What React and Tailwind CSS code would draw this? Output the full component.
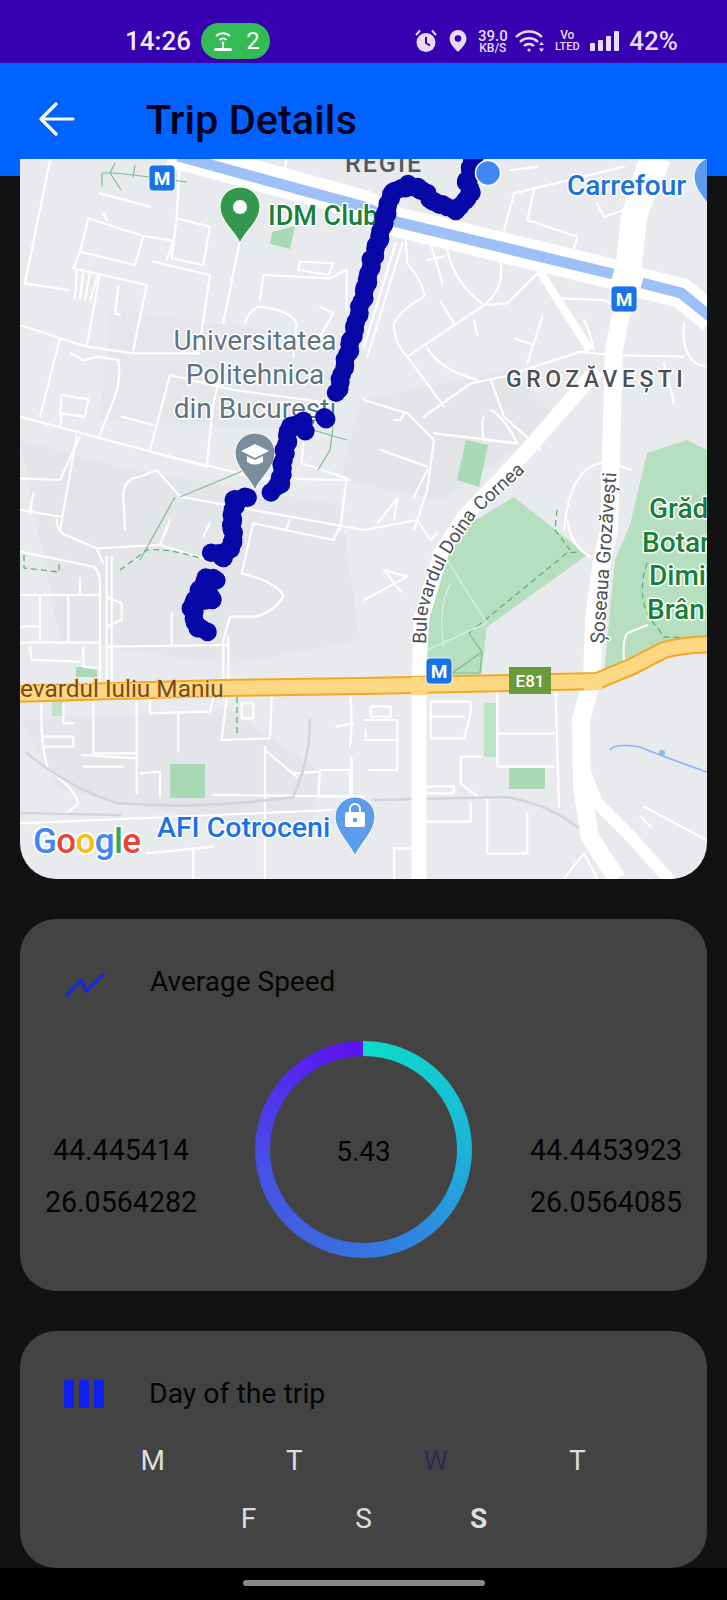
import React from "react";

const Q2 = [
  "M150 30 Q120 180 75 400","M75 400 L205 420","M265 205 L430 258 L405 345 L240 305 Z","M240 305 L220 355 L440 405 L400 600",
  "M300 370 L260 590","M430 258 L520 272 L500 330","M530 205 L630 230 L610 345 L515 325 Z","M460 335 L630 375 L595 610",
  "M60 525 L180 565 L260 590 L400 610 L595 610","M180 565 L120 800","M720 270 L670 520","M735 520 Q745 480 780 470 Q870 480 890 520 L880 620",
  "M215 610 L250 632 L290 620 L355 630 Q365 680 345 740 L295 865","M185 735 L265 748 L255 800 L180 790 Z","M185 790 L180 830",
  "M60 800 L470 910 L780 985 L1050 990","M470 910 L620 950 L640 760 L660 680","M510 675 L450 900","M510 675 L700 720 L1000 760",
  "M365 800 L460 825","M780 450 L790 375 L990 385 L1040 360","M900 335 L1000 340 L985 375 L895 360 Z","M910 880 L905 940 L1040 985 L1020 1140",
  "M230 860 L180 1140","M60 985 L180 990 L240 860","M370 1040 Q370 985 420 980 L470 960 L540 1040 L760 1080 L1092 1140","M370 1040 L375 1140",
  "M60 1080 L180 1100","M100 1030 L90 1090","M860 30 L850 70","M300 130 L450 170","M310 190 L320 210","M540 30 L530 205","M355 410 L345 490 L360 495",
  "M230 360 L225 445","M250 365 L240 445","M270 370 L255 450","M295 375 L270 450","M1040 360 L1040 480","M960 470 L1000 490 L960 560",
];
const Q3 = [
  "M90 520 Q110 480 180 440 Q180 400 130 340 L125 270","M90 520 Q90 580 130 620","M130 620 L360 465 L430 460 L520 370","M250 300 Q270 400 360 465 Q420 420 410 340",
  "M190 595 Q230 660 340 690","M130 620 L240 770","M180 800 L320 700 L420 680 L650 605 L740 615 L960 620","M450 565 L510 585","M535 500 L490 640",
  "M230 455 L270 520","M330 510 L340 555","M380 690 L420 800 L530 900","M590 445 L720 450 L760 470","M660 510 Q680 550 690 600",
  "M420 240 L450 130 L780 50","M490 210 L640 260 L630 295","M490 210 L510 120","M700 160 L720 200 L780 180","M440 60 L520 50",
  "M0 750 L130 790 L210 870 L190 1020 L150 1140","M210 850 L460 880","M50 900 L190 950","M150 1040 L190 960","M120 790 L110 810 L90 810","M40 1120 L100 1045 L90 1110",
  "M600 1140 Q620 920 750 940 L800 960","M360 800 Q350 810 360 870 L460 880 Q420 800 380 780","M900 640 L930 760","M960 520 Q950 640 1028 650","M190 330 L240 320","M200 280 L235 400",
  "M115 280 L10 620","M95 280 L0 590",
];
const Q4 = [
  "M60 95 L280 140 Q300 150 300 200 L300 480","M170 0 Q170 40 210 50 L290 85 L480 75 L610 115","M290 85 L310 130","M510 0 L480 75","M630 10 L610 50",
  "M760 10 L725 160 Q840 190 850 230 Q820 280 760 290 L690 290 L670 360 L670 480","M685 350 L685 480","M60 225 L300 225","M120 225 L120 365","M205 225 L205 365",
  "M60 320 L120 320","M60 368 L300 368","M320 380 L680 375","M515 280 L515 375","M90 380 L95 420 L240 425","M250 380 L250 440 L290 445","M320 230 L365 250 L365 300 L320 320",
  "M240 175 L240 225","M760 10 L1000 60 L1020 20","M870 0 L860 25","M320 110 L320 480","M335 110 L335 480","M125 550 Q120 680 145 750 Q220 800 235 850 L200 880 L60 880","M130 650 L220 650 L220 680 L130 680",
  "M190 550 L190 610 L220 610","M280 550 L280 700 L410 700","M410 545 L410 820","M450 545 L450 580 L630 575 L640 535","M535 580 L535 695","M665 660 L680 535",
  "M665 660 L810 655 L815 530","M725 550 L725 595 L760 595 L760 550 Z","M795 680 L795 1076","M1050 520 Q1060 600 1050 680","M1010 620 L1060 610","M960 750 L1050 750 L1050 830 L955 830 Z",
  "M880 760 L960 755","M640 825 L1092 830","M420 760 L480 755 L480 830","M795 690 L890 770","M245 705 L410 715","M250 740 L370 740","M60 910 L1000 870","M440 1000 L640 980","M580 990 L580 1076","M1055 715 L1055 870",
];
const Q5 = [
  "M20 560 L80 560 L80 590 L20 590 Z","M0 600 L100 600 L100 750 L15 750","M5 630 L5 660 L100 660","M200 545 L320 545 L320 580 L300 655 L200 655 Z","M200 590 L300 590",
  "M400 520 L400 740 L570 740","M400 640 L570 640","M190 800 L270 800 L270 820 L190 820","M575 520 L585 860","M290 710 L350 710","M290 710 L290 790 L340 830",
  "M370 840 L370 1000 L490 1000 L490 880","M320 850 L320 905 L190 905","M90 985 L145 985","M90 985 L90 1076","M0 240 L130 170 L60 150 L110 215","M0 30 L160 0","M160 0 L200 60 L220 40",
  "M610 0 Q620 80 680 110","M780 420 Q775 360 790 340 L850 315","M750 450 Q760 420 805 430","M840 860 L1028 960","M830 890 L860 920","M600 1076 L660 1000 L700 1076",
];

const ROUTE = [
  [[474, 156], [467, 182], [471, 193], [457, 210], [434, 202], [422, 190], [409, 185], [392, 193], [386, 213], [379, 240], [372, 260], [367, 283], [337, 393]],
  [[325, 418], [325, 418]],
  [[305, 432], [302, 422], [290, 427], [285, 450], [280, 483], [272, 492]],
  [[248, 497], [235, 500], [232, 520], [233, 543], [223, 557], [212, 552]],
  [[217, 580], [207, 578], [200, 590], [213, 599], [195, 600], [192, 608], [197, 627], [208, 632]],
];

function routeDots() {
  const dots = [];
  let n = 0;
  ROUTE.forEach((line) => {
    for (let i = 0; i < line.length - 1; i++) {
      const [x1, y1] = line[i];
      const [x2, y2] = line[i + 1];
      const steps = Math.max(1, Math.round(Math.hypot(x2 - x1, y2 - y1) / 5));
      for (let s = 0; s <= steps; s++) {
        n += 1;
        dots.push({ key: n, cx: x1 + ((x2 - x1) * s) / steps + Math.sin(n * 1.7) * 1.2, cy: y1 + ((y2 - y1) * s) / steps + Math.cos(n * 2.3) * 1.2 });
      }
    }
  });
  return dots;
}

function Roads({ list, tx, ty }) {
  return (
    <g transform={`translate(${tx} ${ty}) scale(0.3333)`} fill="none" stroke="#ffffff" strokeWidth="6.5" strokeLinecap="round" strokeLinejoin="round">
      {list.map((d) => <path key={d} d={d} />)}
    </g>
  );
}

function MBadge({ x, y }) {
  return (
    <g>
      <rect x={x} y={y} width="26" height="26" rx="4" fill="#1a73e8" stroke="#fff" strokeWidth="0.8" />
      <text x={x + 13} y={y + 19.5} textAnchor="middle" fontSize="19" fontWeight="700" fill="#fff">M</text>
    </g>
  );
}

function Pin({ cx, cy, tip, r = 20, fill }) {
  const t = tip;
  return <path d={`M${cx - r} ${cy} A${r} ${r} 0 1 1 ${cx + r} ${cy} C${cx + r} ${cy + 14} ${cx + 5} ${t - 12} ${cx} ${t} C${cx - 5} ${t - 12} ${cx - r} ${cy + 14} ${cx - r} ${cy} Z`} fill={fill} stroke="#fff" strokeWidth="1" />;
}

function MapCanvas() {
  const halo = { paintOrder: "stroke", stroke: "#ffffff", strokeWidth: 3, strokeLinejoin: "round" };
  return (
    <svg viewBox="20 159 687 720" className="block w-full h-full" fontFamily="Roboto, sans-serif">
      <rect x="20" y="159" width="687" height="720" fill="#e8eaed" />
      <path d="M20 440 L130 470 L340 505 L360 640 L230 665 L60 640 Z" fill="#e4e5e8" />
      <path d="M110 310 L340 340 L320 430 L100 420 Z" fill="#e5e6e9" />
      <path d="M20 720 L230 710 L320 770 L310 840 L60 790 Z" fill="#e4e5e8" />
      <path d="M360 400 L510 370 L560 420 L440 500 L340 480 Z" fill="#e4e5e8" />
      <path d="M464 527 L514 497 L587 555 L487 627 L481 677 L427 677 L427 653 L431 603 L447 553 Z" fill="#b6dfc0" />
      <path d="M647 453 L687 440 L707 450 L707 640 L670 648 L630 665 L604 676 L610 610 L615 560 L630 525 Z" fill="#b6dfc0" />
      <path d="M272 232 L295 226 L290 249 L270 244 Z" fill="#a8dab5" />
      <path d="M466 440 L488 445 L479 487 L457 480 Z" fill="#a8dab5" />
      <rect x="170" y="764" width="35" height="34" fill="#a8dab5" />
      <rect x="509" y="768" width="36" height="21" fill="#a8dab5" />
      <rect x="484" y="703" width="12" height="54" fill="#bfe3c8" />
      <rect x="76" y="667" width="21" height="10" fill="#a8dab5" />
      <rect x="52" y="700" width="12" height="16" fill="#bfe3c8" />

      <Roads list={Q2} tx={0} ty={150} />
      <Roads list={Q3} tx={364} ty={150} />
      <Roads list={Q4} tx={0} ty={520} />
      <Roads list={Q5} tx={364} ty={520} />

      <g fill="none" stroke="#d3d4d8" strokeWidth="2.5" strokeLinecap="round">
        <path d="M27 753 Q67 787 117 803 Q200 810 293 797 Q310 760 310 720" />
        <path d="M374 800 L507 797 Q550 805 577 827" />
        <path d="M20 813 L120 815" />
      </g>
      <g fill="none" stroke="#7dbb8e" strokeWidth="1.2">
        <path d="M102 173 L115 173 L150 177 L187 182 M115 163 L110 173 L121 190 M135 165 L133 177 M102 173 L102 187" />
        <path d="M313 430 L347 440 M333 427 L330 450 L318 470" />
        <path d="M180 497 L245 470 M140 560 L175 497" />
        <path d="M469 633 L482 652 L452 673 L480 673 M482 652 L480 673" />
      </g>
      <g fill="none" stroke="#5fae7a" strokeWidth="1.3" strokeDasharray="6 4">
        <path d="M120 570 L147 550 Q167 548 200 558" />
        <path d="M24 555 L24 568 L59 572 L59 562" />
        <path d="M237 697 L237 737" />
        <path d="M469 633 L567 553 L578 552" />
        <path d="M647 563 Q634 603 657 627 L664 637 L707 638" />
        <path d="M557 510 L555 530 L570 550" />
      </g>
      <g fill="none" stroke="#d4eeda" strokeWidth="1.5">
        <path d="M447 560 L487 623 M427 650 L487 623 M451 583 Q437 607 444 647" />
      </g>
      <path d="M610 750 Q614 743 640 747 Q664 757 707 772" fill="none" stroke="#8ab4f8" strokeWidth="1.6" />
      <circle cx="662" cy="753" r="3" fill="#8ab4f8" />

      {/* main roads */}
      <g fill="none" stroke="#ffffff" strokeLinecap="butt" strokeLinejoin="round">
        <path d="M662 159 L637 217 L627 283 L614 350 L612 417 L609 530 L602 560 L594 620 L592 680 L581 720 L582 787 L590 837 L617 879" strokeWidth="18" />
        <path d="M584 770 L597 803 L631 837 L674 885" strokeWidth="12" />
        <path d="M540 272 L590 350" strokeWidth="8" />
        <path d="M597 370 L521 457 L464 517 L441 553 L421 620 L419 687 L419 879" strokeWidth="15" />
        <path d="M170 152 L364 205 L397 222 L617 275 L641 283 L681 293 L712 318" strokeWidth="30" />
      </g>
      <path d="M178 156 L364 207 L397 222 L613 274 M642 283 L681 293 L712 318" fill="none" stroke="#9dc0f8" strokeWidth="11" />
      <path d="M652 159 L634 217 L627 283" fill="none" stroke="#ffffff" strokeWidth="26" />

      {/* highway */}
      <path d="M15 694 L223 688 L364 686 L511 683 L597 681 L631 667 L664 650 Q680 645 712 644" fill="none" stroke="#f2a922" strokeWidth="18" />
      <path d="M15 694 L223 688 L364 686 L511 683 L597 681 L631 667 L664 650 Q680 645 712 644" fill="none" stroke="#fdd884" strokeWidth="14" />
      <rect x="411" y="677" width="16" height="18" fill="#fdd884" />
      <rect x="584" y="674" width="18" height="16" fill="#fdd884" />

      {/* labels */}
      <text x="345" y="172" fontSize="25" fontWeight="500" fill="#55595e" letterSpacing="2">REGIE</text>
      <text x="506" y="387" fontSize="23" fontWeight="500" fill="#4d5156" letterSpacing="4.5" style={halo}>GROZĂVEȘTI</text>
      <text x="567" y="195" fontSize="28" fontWeight="500" fill="#1a73d8" style={halo}>Carrefour</text>
      <text x="268" y="225" fontSize="27" fontWeight="500" fill="#188038" style={halo}>IDM Club</text>
      <g fontSize="28" fill="#5f7481" textAnchor="middle" style={halo}>
        <text x="255" y="350">Universitatea</text>
        <text x="255" y="384">Politehnica</text>
        <text x="255" y="418">din București</text>
      </g>
      <text x="20" y="697" fontSize="24.4" fill="#7b4a17" style={{ paintOrder: "stroke", stroke: "#fdd884", strokeWidth: 2 }}>evardul Iuliu Maniu</text>
      <path id="doina" d="M426 644 L427 615 Q436 575 456 545 L475 517 L534 463" fill="none" />
      <text fontSize="19" fill="#4d5156" style={halo}><textPath href="#doina">Bulevardul Doina Cornea</textPath></text>
      <path id="sos" d="M604 644 L617 462" fill="none" />
      <text fontSize="19.5" fill="#4d5156" style={halo}><textPath href="#sos">Șoseaua Grozăvești</textPath></text>
      <g fontSize="28" fontWeight="500" fill="#188038" style={halo}>
        <text x="649" y="518">Grăd</text>
        <text x="642" y="552">Botan</text>
        <text x="649" y="585">Dimi</text>
        <text x="647" y="619">Brân</text>
      </g>
      <text x="157" y="837" fontSize="28.5" fontWeight="500" fill="#1a73e8" style={halo}>AFI Cotroceni</text>
      <text x="33" y="853" fontSize="35" fontWeight="500" style={{ paintOrder: "stroke", stroke: "#ffffff", strokeWidth: 4, strokeLinejoin: "round" }} letterSpacing="-0.6">
        <tspan fill="#4285f4">G</tspan><tspan fill="#ea4335">o</tspan><tspan fill="#fbbc05">o</tspan><tspan fill="#4285f4">g</tspan><tspan fill="#34a853">l</tspan><tspan fill="#ea4335">e</tspan>
      </text>

      {/* shields */}
      <rect x="509" y="667" width="42" height="27" fill="#6a9a3c" />
      <text x="530" y="687" textAnchor="middle" fontSize="17" fontWeight="500" fill="#fff">E81</text>
      <MBadge x={149} y={165} />
      <MBadge x={611} y={286} />
      <MBadge x={426} y={658} />

      {/* pins */}
      <Pin cx={240} cy={207} tip={243} fill="#34974f" />
      <circle cx="240" cy="207" r="7" fill="#ffffff" />
      <Pin cx={255} cy={453} tip={490} fill="#7b8d9a" />
      <path d="M241 451 L255 444 L269 451 L255 458 Z" fill="#ffffff" />
      <path d="M247 456 L247 462 Q255 467 263 462 L263 456 L255 460 Z" fill="#ffffff" />
      <Pin cx={355} cy={817} tip={856} fill="#5c9ceb" />
      <rect x="345" y="812" width="20" height="15" rx="2" fill="#ffffff" />
      <path d="M350 813 V809 A5 5 0 0 1 360 809 V813" fill="none" stroke="#ffffff" strokeWidth="2" />
      <circle cx="355" cy="820" r="2.2" fill="#5c9ceb" />
      <Pin cx={714} cy={177} tip={214} fill="#5c9ceb" />

      {/* route */}
      <g fill="#0808a8">
        {routeDots().map((d) => <circle key={d.key} cx={d.cx} cy={d.cy} r="9.3" />)}
      </g>
      <circle cx="488" cy="173" r="12.5" fill="#4285f4" stroke="#ffffff" strokeWidth="1.5" />
    </svg>
  );
}

function StatusIcons() {
  const c = "#e8dcf5";
  return (
    <div className="ml-auto flex items-center text-[#e8dcf5]">
      <svg width="22" height="24" viewBox="0 0 22 24" className="mr-[12px]">
        <circle cx="11" cy="13.5" r="9.5" fill={c} />
        <path d="M1 6 L5 1.5 M21 6 L17 1.5" stroke={c} strokeWidth="2" />
        <path d="M11 8 V14 L15 16.5" fill="none" stroke="#3700b0" strokeWidth="2" />
      </svg>
      <svg width="18" height="24" viewBox="0 0 18 24" className="mr-[9px]">
        <path d="M9 1 A8.5 8.5 0 0 1 17.5 9.5 C17.5 15 11 21 9 23 C7 21 .5 15 .5 9.5 A8.5 8.5 0 0 1 9 1 Z" fill={c} />
        <circle cx="9" cy="9.5" r="3.3" fill="#3700b0" />
      </svg>
      <div className="w-[33px] mr-[6px] flex flex-col items-center font-medium leading-none">
        <span className="text-[15px] leading-[14px]">39.0</span>
        <span className="text-[12px] leading-[11px]">KB/S</span>
      </div>
      <svg width="31" height="24" viewBox="0 0 31 24" className="mr-[9px]" fill="none" stroke={c} strokeWidth="2.5">
        <path d="M1 8 A18 18 0 0 1 27 8" />
        <path d="M5 13 A12.5 12.5 0 0 1 23 13" />
        <path d="M9 17 A7 7 0 0 1 19 17" />
        <circle cx="14" cy="21" r="1.6" fill={c} stroke="none" />
        <path d="M26.5 13 L29 16 H24 Z M26.5 23 L29 19.5 H24 Z" fill={c} stroke="none" />
      </svg>
      <div className="w-[24px] mr-[11px] flex flex-col items-center font-medium leading-none">
        <span className="text-[12px] leading-[12px]">Vo</span>
        <span className="text-[11px] leading-[12px]">LTED</span>
      </div>
      <svg width="30" height="22" viewBox="0 0 30 22" className="mr-[9px]" fill={c}>
        <rect x="0" y="13" width="5" height="8" rx="1" />
        <rect x="8" y="10" width="5" height="11" rx="1" />
        <rect x="16" y="6" width="5" height="15" rx="1" />
        <rect x="24" y="1" width="5" height="20" rx="1" />
      </svg>
      <span className="text-[26px] leading-none font-medium">42%</span>
    </div>
  );
}

function StatusBar() {
  return (
    <div className="h-[63px] bg-[#3700b0] flex items-center pt-[19px] pl-[125px] pr-[49px]">
      <span className="text-[26px] leading-none font-medium text-[#f2eef8]">14:26</span>
      <div className="ml-[10px] w-[69px] h-[36px] rounded-[18px] bg-[#34bb55] flex items-center justify-center gap-[11px] text-white">
        <svg width="24" height="24" viewBox="0 0 24 24" fill="none" stroke="#ffffff" strokeWidth="2">
          <path d="M5 7 A10 10 0 0 1 19 7" />
          <path d="M8.5 11 A5 5 0 0 1 15.5 11" />
          <circle cx="12" cy="14" r="1.4" fill="#ffffff" stroke="none" />
          <path d="M12 14 V20" strokeWidth="1.5" />
          <rect x="3" y="19" width="18" height="3" rx="1.5" fill="#ffffff" stroke="none" />
        </svg>
        <span className="text-[24px] leading-none">2</span>
      </div>
      <StatusIcons />
    </div>
  );
}

function Header() {
  return (
    <div className="h-[113px] bg-[#0062ff] flex items-start pt-[38px]">
      <svg width="36" height="36" viewBox="0 0 36 36" fill="none" stroke="#ffffff" strokeWidth="3.2" strokeLinecap="round" strokeLinejoin="round" className="ml-[39px]">
        <path d="M34 18 H3 M17 3 L2 18 L17 33" />
      </svg>
      <h1 className="ml-[71px] mt-[-3px] text-[41.5px] leading-[44px] font-medium text-[#00001c]">Trip Details</h1>
    </div>
  );
}

function CoordPair({ a, b }) {
  return (
    <div className="w-[152px] flex flex-col items-center gap-[20px] text-[28.6px] leading-[32px] text-[#050505] whitespace-nowrap">
      <span>{a}</span>
      <span>{b}</span>
    </div>
  );
}

function SpeedCard() {
  return (
    <section className="mt-10 mx-5 h-[372px] rounded-[36px] bg-[#434343] flex flex-col">
      <div className="flex items-center pt-[46px] pl-[44px]">
        <svg width="42" height="28" viewBox="0 0 42 28" fill="none" stroke="#1428e0" strokeWidth="3.2" strokeLinejoin="miter" className="mt-[6px]">
          <path d="M2 25 L17 9 L22 20 L40 3" />
        </svg>
        <span className="ml-[44px] text-[28px] leading-[32px] text-[#050505]">Average Speed</span>
      </div>
      <div className="mt-[42px] mx-auto w-[217px] h-[217px] rounded-full p-[15px] bg-[conic-gradient(#0ddcca_0deg,#1bb5d6_90deg,#2f86e0_150deg,#3a6de0_190deg,#4650e6_260deg,#5a14f0_350deg,#5a14f0_360deg)]">
        <div className="w-full h-full rounded-full bg-[#434343] flex items-center justify-center">
          <span className="text-[28px] leading-[32px] text-[#050505] mt-[4px]">5.43</span>
        </div>
      </div>
      <div className="flex justify-between -mt-[124px] px-[25px]">
        <CoordPair a="44.445414" b="26.0564282" />
        <CoordPair a="44.4453923" b="26.0564085" />
      </div>
    </section>
  );
}

function DaysCard() {
  return (
    <section className="mt-10 mx-5 h-[237px] rounded-[36px] bg-[#434343]">
      <div className="flex items-center pt-[47px] pl-[44px]">
        <div className="flex gap-[5px]">
          <div className="w-[10px] h-[28px] bg-[#1020f0] rounded-[1px]" />
          <div className="w-[10px] h-[28px] bg-[#1020f0] rounded-[1px]" />
          <div className="w-[10px] h-[28px] bg-[#1020f0] rounded-[1px]" />
        </div>
        <span className="ml-[45px] text-[28.4px] leading-[32px] text-[#050505]">Day of the trip</span>
      </div>
      <div className="mt-[35px] ml-[62px] w-[566px] grid grid-cols-4 text-center text-[28px] leading-[32px] text-[#dedede]">
        <span>M</span>
        <span>T</span>
        <span className="text-[#2c2a5a]">W</span>
        <span>T</span>
      </div>
      <div className="mt-[26px] flex justify-center text-center text-[28px] leading-[32px] text-[#dedede]">
        <span className="w-[115px]">F</span>
        <span className="w-[115px]">S</span>
        <span className="w-[115px] font-bold">S</span>
      </div>
    </section>
  );
}

export default function App() {
  return (
    <div className="relative w-[727px] h-[1600px] overflow-hidden bg-[#121212] font-['Roboto',sans-serif]">
      <StatusBar />
      <Header />
      <div className="-mt-[17px] mx-5 h-[720px] rounded-b-[36px] overflow-hidden">
        <MapCanvas />
      </div>
      <SpeedCard />
      <DaysCard />
      <div className="h-[32px] bg-black flex justify-center pt-[12px]">
        <div className="w-[242px] h-[6px] rounded-full bg-[#888888]" />
      </div>
    </div>
  );
}
